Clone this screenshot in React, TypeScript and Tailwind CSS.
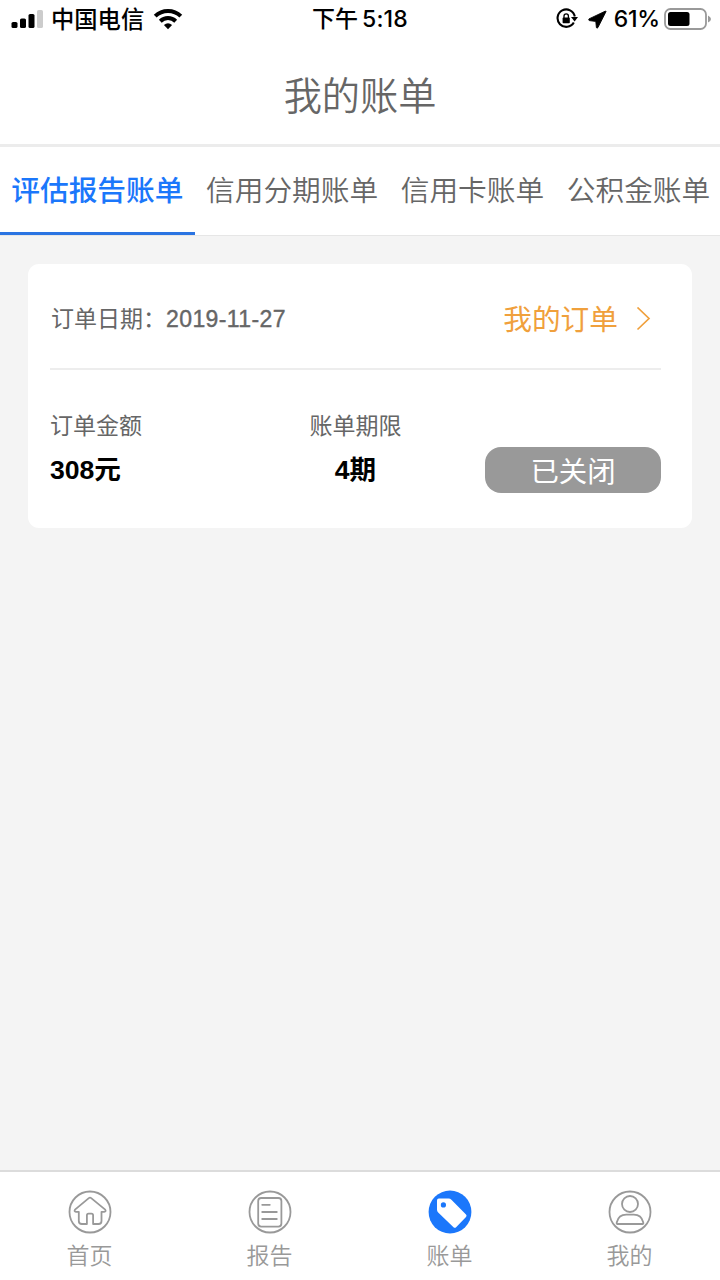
import { useState, type ReactNode } from "react";

type Tab = {
  id: string;
  label: string;
};

type NavItem = {
  id: string;
  label: string;
  icon: ReactNode;
};

const tabs: Tab[] = [
  { id: "report", label: "评估报告账单" },
  { id: "instalment", label: "信用分期账单" },
  { id: "card", label: "信用卡账单" },
  { id: "fund", label: "公积金账单" },
];

const bill = {
  date: "2019-11-27",
  amount: "308元",
  term: "4期",
  status: "已关闭",
};

function HomeIcon() {
  return (
    <svg width="44" height="44" viewBox="0 0 44 44" fill="none" stroke="#999" strokeWidth="1.8" strokeLinejoin="round" strokeLinecap="round">
      <circle cx="22" cy="22" r="20.5" />
      <path d="M20.8 8.1 L7 19.6 Q5.8 21.6 8 21.8 H10.8 V31 Q10.8 34 13.8 34 H18.9 V25.2 Q18.9 23.6 20.5 23.6 H23.5 Q25.1 23.6 25.1 25.2 V34 H30.5 Q33.5 34 33.5 31 V21.8 H36.2 Q38.4 21.6 37.2 19.6 L23.2 8.1 Q22 7.2 20.8 8.1 Z" />
    </svg>
  );
}

function ReportIcon() {
  return (
    <svg width="44" height="44" viewBox="0 0 44 44" fill="none" stroke="#999" strokeWidth="1.8" strokeLinecap="round">
      <circle cx="22" cy="22" r="20.5" />
      <rect x="10.2" y="8" width="23.2" height="28.6" rx="3" />
      <path d="M14.2 14.8 H21.8 M14.2 22 H28.8 M14.2 29 H28.8" />
    </svg>
  );
}

function BillIcon() {
  return (
    <svg width="44" height="44" viewBox="0 0 44 44">
      <circle cx="22" cy="22" r="21.4" fill="#1b77fb" />
      <path
        d="M10.8 8.6 H20.6 Q22.2 8.6 23.4 9.8 L38 24.4 Q39.2 25.7 38 27 L28.1 37.2 Q26.8 38.4 25.5 37.2 L10.2 22.5 Q9 21.3 9 19.8 V10.4 Q9 8.6 10.8 8.6 Z"
        fill="#fff"
      />
      <circle cx="15.4" cy="14.9" r="2.6" fill="#1b77fb" />
    </svg>
  );
}

function MineIcon() {
  return (
    <svg width="44" height="44" viewBox="0 0 44 44" fill="none" stroke="#999" strokeWidth="1.8" strokeLinejoin="round">
      <circle cx="22" cy="22" r="20.5" />
      <circle cx="22" cy="14" r="8" />
      <path d="M9.2 34 Q8.4 34 8.8 32.2 Q10.6 24.6 18.2 24.6 H25.8 Q33.4 24.6 35.2 32.2 Q35.6 34 34.8 34 Z" />
    </svg>
  );
}

const navItems: NavItem[] = [
  { id: "home", label: "首页", icon: <HomeIcon /> },
  { id: "report", label: "报告", icon: <ReportIcon /> },
  { id: "bill", label: "账单", icon: <BillIcon /> },
  { id: "mine", label: "我的", icon: <MineIcon /> },
];

function StatusBar() {
  return (
    <div className="grid h-10 grid-cols-3 items-center pb-[2px] text-[23px] leading-none font-medium text-black">
      <div className="flex items-center pl-[11px]">
        <svg width="33" height="18" viewBox="0 0 33 18">
          <rect x="0.5" y="12" width="6" height="6" rx="1.6" />
          <rect x="9" y="8.5" width="6" height="9.5" rx="1.6" />
          <rect x="17.5" y="4" width="6" height="14" rx="1.6" />
          <rect x="26" y="0" width="6" height="18" rx="1.6" fill="#ccc" />
        </svg>
        <span className="ml-[7px] pt-[3px] text-[23.3px]">中国电信</span>
        <svg className="ml-[9px]" width="30" height="22" viewBox="0 0 30 22" fill="none" stroke="#000" strokeWidth="4">
          <path d="M2.2 8.1 A18.3 18.3 0 0 1 27.8 8.1" />
          <path d="M7.3 13.2 A11 11 0 0 1 22.7 13.2" />
          <path d="M10.9 17.1 Q15 13.6 19.1 17.1 L15 21.2 Z" fill="#000" stroke="none" />
        </svg>
      </div>
      <div className="pt-px text-center whitespace-nowrap">
        下午<span className="ml-[4px] font-['Inter'] tracking-[0.2px]">5:18</span>
      </div>
      <div className="flex items-center justify-end pr-[9px]">
        <svg width="22" height="22" viewBox="0 0 22 22">
          <path d="M17.8 14.5 A8.7 8.7 0 1 1 18.8 8.5" fill="none" stroke="#000" strokeWidth="2.1" />
          <path d="M15 9 H22 L18.6 13.4 Z" />
          <rect x="6.6" y="9.6" width="7.2" height="5.7" rx="0.8" />
          <path d="M8 10 V8 a2.2 2.2 0 0 1 4.4 0 V10" fill="none" stroke="#000" strokeWidth="1.3" />
        </svg>
        <svg className="ml-[10px]" width="19" height="19" viewBox="0 0 19 19" stroke="#000" strokeWidth="0.9" strokeLinejoin="round">
          <path d="M17.6 1 L1 8.9 Q0.2 10.2 1.3 10.6 L7.8 11.4 L8.4 17.6 Q9 18.8 9.9 17.6 L18 1.6 Z" />
        </svg>
        <span className="ml-[7px] pt-px font-['Inter'] tracking-[-0.2px]">61%</span>
        <svg className="ml-[4px]" width="47" height="22" viewBox="0 0 47 22">
          <rect x="1" y="1" width="41" height="20" rx="5.5" fill="none" stroke="#999" strokeWidth="1.8" />
          <rect x="4" y="4" width="21.5" height="14" rx="2.5" />
          <path d="M44 7.5 Q47 9 47 11 T44 14.5 Z" fill="#999" />
        </svg>
      </div>
    </div>
  );
}

export default function App() {
  const [activeTab, setActiveTab] = useState("report");

  return (
    <div className="flex h-screen w-full flex-col overflow-hidden bg-[#f4f4f4] font-['Liberation_Sans','Noto_Sans_CJK_SC',sans-serif] text-[#666]">
      <header className="h-[147px] shrink-0 border-b-[3px] border-[#ececec] bg-white">
        <StatusBar />
        <h1 className="flex h-[114px] items-center justify-center text-[38.2px] leading-none font-[350]">
          我的账单
        </h1>
      </header>

      <nav className="flex h-[89px] shrink-0 overflow-hidden border-b border-[#e6e6e6] bg-white">
        {tabs.map((tab) => (
          <button
            key={tab.id}
            className={`h-[88px] shrink-0 border-b-[3px] px-[11.3px] pt-[4px] text-[28.7px] leading-none whitespace-nowrap ${
              activeTab === tab.id
                ? "border-[#2a74e2] font-medium text-[#1b77fb]"
                : "border-transparent font-[350]"
            }`}
            onClick={() => setActiveTab(tab.id)}
          >
            {tab.label}
          </button>
        ))}
      </nav>

      <main className="flex-1 px-7 pt-7">
        <section className="h-[264px] rounded-[11px] bg-white pr-[31px] pl-[22px]">
          <div className="flex h-[106px] items-center justify-between border-b-2 border-[#ededed] pt-[7px]">
            <p className="pl-px text-[23px] leading-none">
              订单日期：
              <span className="tracking-[0.4px] [-webkit-text-stroke:0.4px_#666]">{bill.date}</span>
            </p>
            <a className="flex items-center pr-[10px] text-[28.7px] leading-none text-[#f0a03c]" href="#orders">
              <span className="pt-px">我的订单</span>
              <svg className="ml-[18px]" width="15" height="24" viewBox="0 0 15 24" fill="none" stroke="#f0a03c" strokeWidth="1.7">
                <path d="M1.5 0.5 L13 11.5 L1.5 22.5" />
              </svg>
            </a>
          </div>
          <div className="flex items-start justify-between pt-[45px]">
            <div className="w-[160px]">
              <p className="text-[23px] leading-none">订单金额</p>
              <p className="mt-[19px] text-[26.6px] leading-none font-bold text-black">{bill.amount}</p>
            </div>
            <div className="ml-[16px] w-[150px] text-center">
              <p className="text-[23px] leading-none">账单期限</p>
              <p className="mt-[19px] text-[26.6px] leading-none font-bold text-black">{bill.term}</p>
            </div>
            <span className="mt-[32px] flex h-[46px] w-[176px] items-center justify-center rounded-2xl bg-[#999] pt-[4px] text-[28.4px] leading-none text-white">
              {bill.status}
            </span>
          </div>
        </section>
      </main>

      <footer className="grid h-[110px] shrink-0 grid-cols-4 border-t-2 border-[#dcdcdc] bg-white">
        {navItems.map((item) => (
          <a key={item.id} className="flex flex-col items-center pt-[18px] pr-px text-[23px] leading-none font-[350] text-[#999]" href={`#${item.id}`}>
            {item.icon}
            <span className="mt-[11px]">{item.label}</span>
          </a>
        ))}
      </footer>
    </div>
  );
}
